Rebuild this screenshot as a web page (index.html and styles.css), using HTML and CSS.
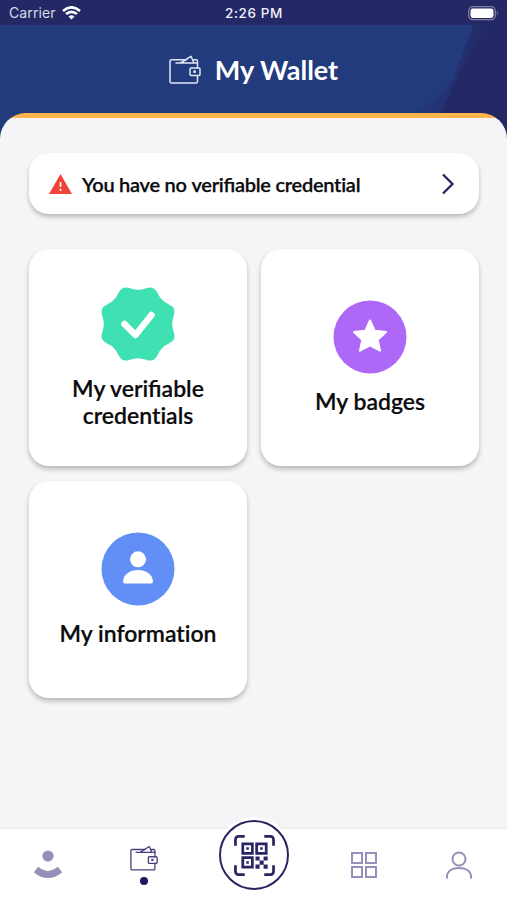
FILE: index.html
```html
<!DOCTYPE html>
<html lang="en">
<head>
<meta charset="utf-8">
<title>My Wallet</title>
<link rel="stylesheet" href="styles.css">
</head>
<body>
<svg class="defs" width="0" height="0" aria-hidden="true">
  <symbol id="wallet" viewBox="0 0 32 30">
    <g fill="none" stroke="currentColor" stroke-width="1.500" stroke-linejoin="round" stroke-linecap="round">
      <path d="M17 4.700H2.500a1.500 1.500 0 0 0-1.500 1.500V26.500a1.500 1.500 0 0 0 1.500 1.500H27a1.500 1.500 0 0 0 1.500-1.500V20.500M28.500 13V6.200a1.500 1.500 0 0 0-1.500-1.500H24.500"/>
      <path d="M11.500 8 22 1.300 25 8M7 8H28.500"/>
      <rect x="21" y="13" width="10" height="7.500" rx="1"/>
      <path d="M25 16h1.200v1.200H25z"/>
    </g>
  </symbol>
</svg>
<div class="app">
  <header class="header">
    <div class="status">
      <div class="carrier"><span>Carrier</span>
        <svg width="19" height="14" viewBox="0 0 19 14" fill="none" stroke="#fff" stroke-width="2.6"><path d="M1 4.9Q9.500-2.300 18 4.900M4 8.100Q9.500 3.500 15 8.100"/><path d="M6.500 10.400Q9.500 8 12.500 10.400L9.500 13.500Z" fill="#fff" stroke="none"/></svg>
      </div>
      <span class="time">2:26 PM</span>
      <svg class="battery" width="31" height="15" viewBox="0 0 31 15"><rect x=".7" y=".7" width="26.600" height="13" rx="4.200" fill="none" stroke="#817fa7" stroke-width="1.300"/><rect x="2.500" y="2.500" width="23" height="9.400" rx="2.300" fill="#fff"/><path d="M28.800 5q2 2.200 0 4.400z" fill="#817fa7"/></svg>
    </div>
    <div class="title-bar">
      <svg class="swoosh" width="100" height="113" viewBox="0 0 100 113"><defs><linearGradient id="shade" x1="0" x2="1"><stop offset=".1" stop-color="#223779"/><stop offset=".7" stop-color="#242c6b"/></linearGradient></defs><path d="M100 0H66Q57 26 46 54 34 74 4 90V113H100Z" fill="url(#shade)"/><path d="M100 0H84Q64 20 54 45L34 88V113H100Z" fill="#242966"/></svg>
      <svg class="title-icon" width="32" height="30"><use href="#wallet"/></svg>
      <h1>My Wallet</h1>
    </div>
  </header>
  <main class="panel">
    <div class="notice">
      <svg width="23" height="20" viewBox="0 0 23 20"><path d="M11.500 0 23 20H0Z" fill="#f04438"/><path d="M11.500 8v4.800M11.500 14.700v2.200" stroke="#fff" stroke-width="1.700"/></svg>
      <span class="notice-text">You have no <span class="joined">verifiable</span> credential</span>
      <svg width="14" height="22" viewBox="0 0 14 22" fill="none" stroke="#292560" stroke-width="2.300"><path d="M2 1.500 11.500 11 2 20.500"/></svg>
    </div>
    <div class="cards">
      <section class="card">
        <svg class="scallop" width="76" height="76" viewBox="-38 -38 76 76"><path fill="#3fe0b2" d="M-7.850-35Q0-32 7.850-35 15.700-38 19.150-30.300 22.600-22.600 30.300-19.150 38-15.700 35-7.850 32 0 35 7.850 38 15.700 30.300 19.150 22.600 22.600 19.150 30.300 15.700 38 7.850 35 0 32-7.850 35-15.700 38-19.150 30.300-22.600 22.600-30.300 19.150-38 15.700-35 7.850-32 0-35-7.850-38-15.700-30.300-19.150-22.600-22.600-19.150-30.300-15.700-38-7.850-35Z" transform="scale(1.020)"/><path d="M-13.500 0-2.500 11 13.500-9" fill="none" stroke="#fff" stroke-width="6.500" stroke-linecap="round" stroke-linejoin="round"/></svg>
        <h2>My verifiable <span class="separate">credentials</span></h2>
      </section>
      <section class="card">
        <svg width="74" height="74" viewBox="-37 -37 74 74"><circle r="36.500" fill="#ae68f8"/><path d="M0-16.500 4.700-6.200 16-4.900 7.700 2.800 10 13.700 0 8.300-10 13.700-7.700 2.800-16-4.900-4.700-6.200Z" fill="#fff" stroke="#fff" stroke-width="2" stroke-linejoin="round"/></svg>
        <h2>My badges</h2>
      </section>
      <section class="card">
        <svg width="74" height="74" viewBox="-37 -37 74 74"><circle r="36.500" fill="#628ff5"/><circle cy="-9.700" r="8" fill="#fff"/><path d="M-15 12C-14 5-8 1 0 1S14 5 15 12Q15 14.500 13 14.500H-13Q-15 14.500-15 12Z" fill="#fff"/></svg>
        <h2>My <span class="separate">information</span></h2>
      </section>
    </div>
  </main>
  <nav class="nav">
    <div class="tab home"><svg width="30" height="30" viewBox="0 0 30 30"><circle cx="15" cy="6" r="5.600" fill="#9391b8"/><path d="M3 19.500Q15 29.500 27 19.500" fill="none" stroke="#9391b8" stroke-width="7"/></svg></div>
    <div class="tab current"><svg class="nav-wallet" width="28" height="27"><use href="#wallet"/></svg><i class="dot"></i></div>
    <div class="tab scan">
      <div class="scan-button">
        <svg width="41" height="41" viewBox="0 0 42 42" fill="none" stroke="#292560" stroke-width="2.800"><path d="M1.500 11V4.500a3 3 0 0 1 3-3H11M31 1.500h6.500a3 3 0 0 1 3 3V11M40.500 31v6.500a3 3 0 0 1-3 3H31M11 40.500H4.500a3 3 0 0 1-3-3V31"/><path d="M9 9h9.800v9.800H9zM23.200 9H33v9.800h-9.800zM9 23.200h9.800V33H9z"/><path fill="#292560" stroke="none" d="M12.600 12.600h2.600v2.600h-2.600zM26.800 12.600h2.600v2.600h-2.600zM12.600 26.800h2.600v2.600h-2.600zM22 22h4.200v4.200H22zM30.300 22h4.200v4.200h-4.200zM26.200 26.200h4.200v4.200h-4.200zM22 30.300h4.200v4.200H22zM30.300 30.300h4.200v4.200h-4.200z"/></svg>
      </div>
    </div>
    <div class="tab apps"><svg width="28" height="28" viewBox="0 0 28 28" fill="none" stroke="#9391b8" stroke-width="2"><path d="M2 2h10v10H2zM16 2h10v10H16zM2 16h10v10H2zM16 16h10v10H16z"/></svg></div>
    <div class="tab profile"><svg width="28" height="28" viewBox="0 0 28 28" fill="none" stroke="#9391b8" stroke-width="2"><circle cx="14" cy="8" r="6.500"/><path d="M2 27.500V26C2 20 7 17 14 17S26 20 26 26V27.500"/></svg></div>
  </nav>
</div>
</body>
</html>
```
FILE: styles.css
```css
* { box-sizing: border-box; }
body { margin: 0; background: #f5f5f8; font-family: Lato, sans-serif; color: #0b0b0d; }
svg { display: block; flex: none; }
.defs { position: absolute; }
.app { height: 900px; display: flex; flex-direction: column; overflow: hidden; }
.header { height: 138px; flex: none; background: #213b7c; color: #fff; }
.status { height: 25px; padding: 0 8px 0 9px; background: #242966; display: grid; grid-template-columns: 1fr auto 1fr; align-items: center; font-family: Inter, sans-serif; font-size: 14px; line-height: 26px; }
.carrier { display: flex; align-items: center; gap: 6px; color: #d9d9e8; letter-spacing: .1px; }
.time { font-weight: 500; font-size: 13.5px; letter-spacing: .6px; color: #f0f0f7; }
.battery { justify-self: end; }
.title-bar { position: relative; height: 113px; padding: 0 0 23px; display: flex; justify-content: center; align-items: center; gap: 14px; }
.swoosh { position: absolute; right: 0; top: 0; }
.title-icon { color: #dfe6f6; }
h1 { margin: 0; font-size: 27px; line-height: 34px; font-weight: 700; }
.panel { position: relative; flex: 1; margin-top: -25px; padding: 40px 28px 0 29px; border-radius: 26px 26px 0 0; background: linear-gradient(#fdb54c 5px, #f5f5f8 5px); }
.notice { height: 61px; padding: 0 24px 0 20px; display: flex; align-items: center; background: #fff; border-radius: 20px; box-shadow: 0 3px 4px rgba(0, 0, 0, .24); }
.notice-text { flex: 1; margin-left: 10px; font-size: 20px; font-weight: 600; letter-spacing: -.26px; white-space: nowrap; -webkit-text-stroke: .25px; }
.joined { font-feature-settings: "liga" 1; }
.separate { font-variant-ligatures: none; }
.cards { margin-top: 35px; display: grid; grid-template-columns: 218px 218px; grid-auto-rows: 217px; gap: 15px 14px; }
.card { display: flex; flex-direction: column; align-items: center; justify-content: center; gap: 14px; padding: 0 30px; background: #fff; border-radius: 20px; box-shadow: 0 3px 5px rgba(0, 0, 0, .25); }
.scallop { margin-bottom: -1px; overflow: visible; }
h2 { margin: 0; font-size: 23px; line-height: 27px; font-weight: 600; text-align: center; -webkit-text-stroke: .2px; }
.nav { position: relative; height: 71px; flex: none; display: grid; grid-template-columns: 96px 96px 124px 96px 94px; justify-items: center; background: #fff; box-shadow: 0 -1px 2px rgba(0, 0, 0, .05); }
.home { padding-top: 21px; }
.current { padding-top: 16px; display: flex; flex-direction: column; align-items: center; gap: 5px; color: #47437c; }
.dot { width: 8px; height: 8px; border-radius: 50%; background: #1e1862; }
.scan { margin-top: -12px; width: 76px; height: 76px; padding: 3px; border-radius: 50%; background: #fff; }
.scan-button { width: 70px; height: 70px; display: flex; align-items: center; justify-content: center; border: 2px solid #292560; border-radius: 50%; }
.apps { padding-top: 22px; }
.profile { padding-top: 22px; }
```
